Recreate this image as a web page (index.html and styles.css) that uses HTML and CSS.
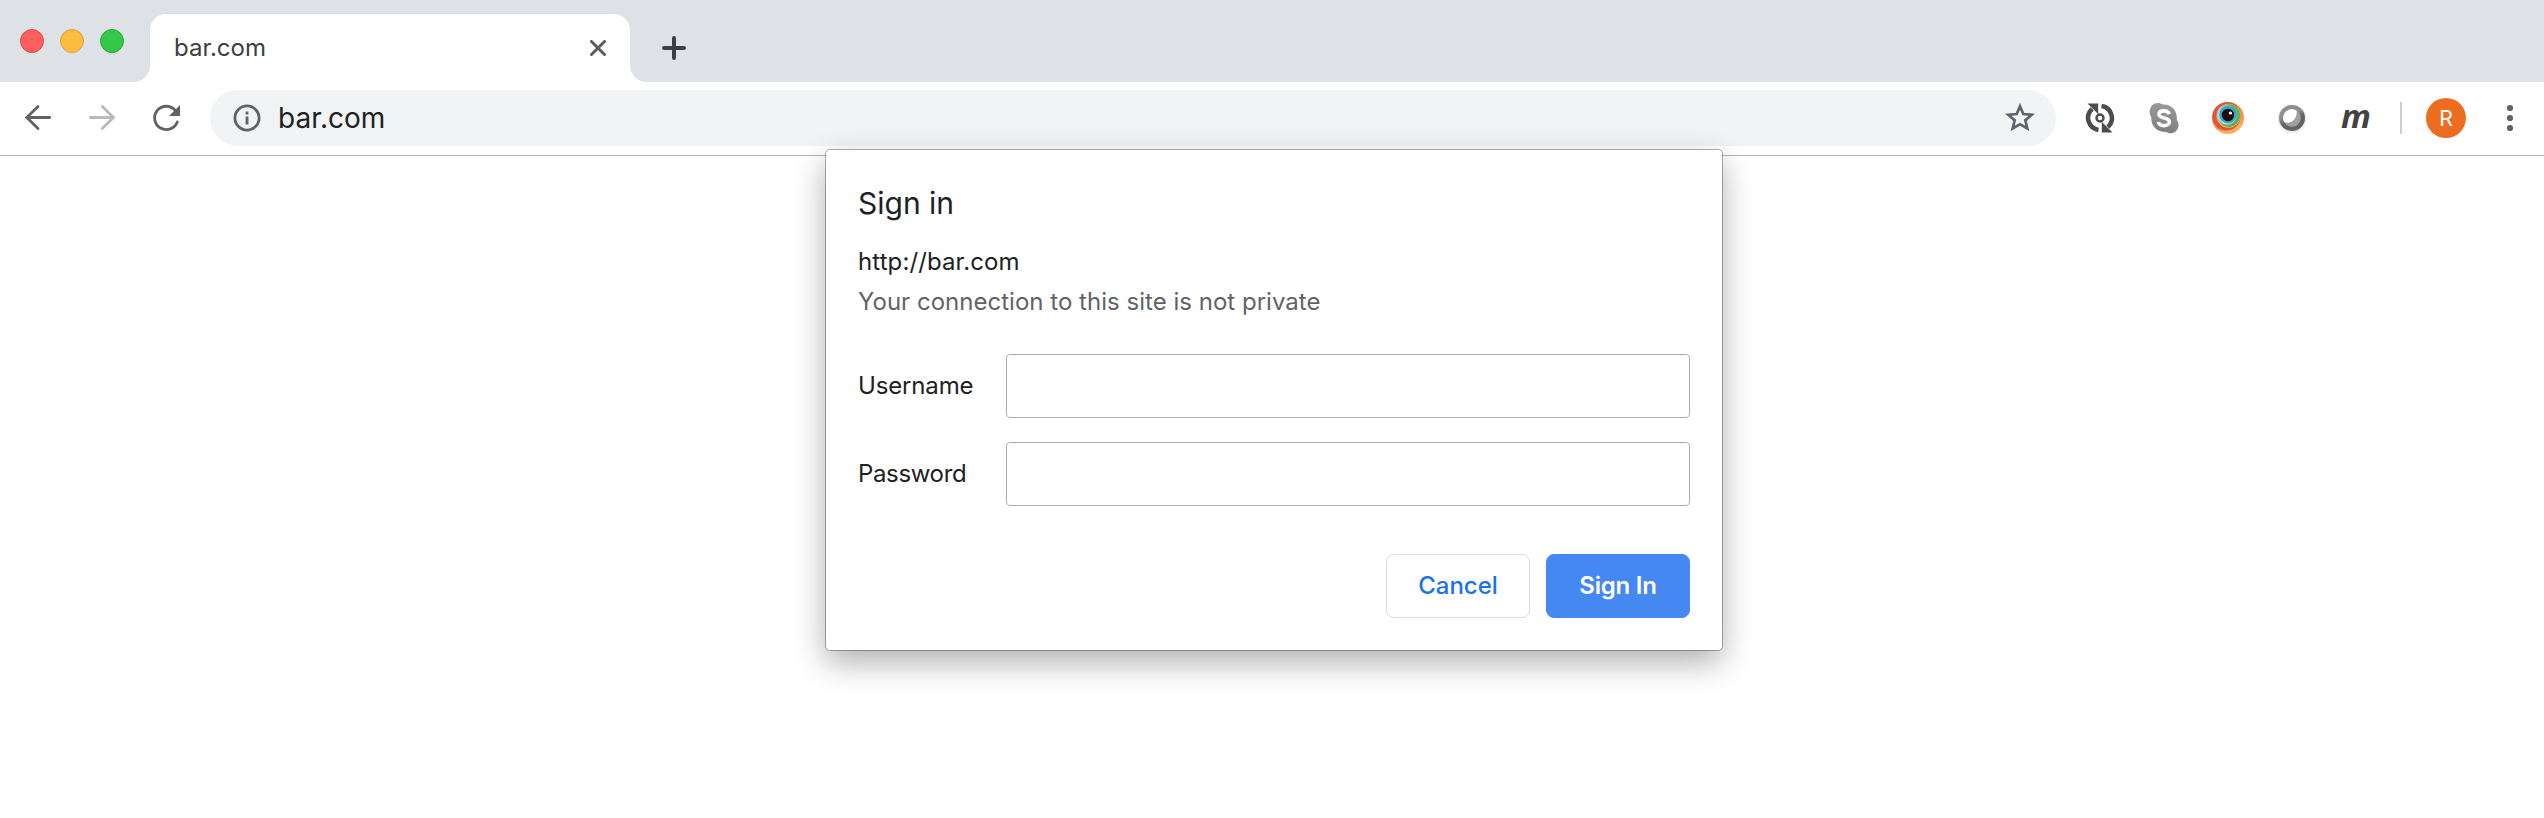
FILE: index.html
```html
<!DOCTYPE html>
<html lang="en">
<head>
<meta charset="utf-8">
<title>bar.com</title>
<link rel="stylesheet" href="styles.css">
</head>
<body>
<header class="tabstrip">
  <div class="lights">
    <span class="light light-close"></span>
    <span class="light light-min"></span>
    <span class="light light-max"></span>
  </div>
  <div class="tab">
    <span class="tab-title">bar.com</span>
    <svg class="tab-close" viewBox="0 0 16 16"><path d="M1.5 1.5l13 13M14.5 1.5l-13 13"/></svg>
  </div>
  <svg class="new-tab" viewBox="0 0 24 24"><path d="M12 2v20M2 12h20"/></svg>
</header>
<nav class="toolbar">
  <div class="cell">
    <svg class="icon nav-icon" viewBox="0 0 32 32"><path d="M27.700 15.500H5M16 4.500L4.800 15.500 16 26.600"/></svg>
  </div>
  <div class="cell">
    <svg class="icon nav-icon disabled" viewBox="0 0 32 32"><path d="M4.400 15.500H27M16.300 4.500L27.500 15.500 16.300 26.600"/></svg>
  </div>
  <div class="cell">
    <svg class="icon nav-icon" viewBox="0 0 32 32"><path d="M27.300 20A11.700 11.700 0 1 1 25.200 8.300"/><path class="solid" d="M30 3v11H19z"/></svg>
  </div>
  <div class="omnibox">
    <svg class="info" viewBox="0 0 28 28"><circle cx="14" cy="14" r="12.100"/><path d="M14 12.600v8M14 7.600v3"/></svg>
    <span class="url">bar.com</span>
    <svg class="star" viewBox="0 0 32 32"><path d="M16 4.300l3.300 7.700 8.400.75-6.350 5.550 1.900 8.200L16 22.200l-7.250 4.300 1.900-8.200L4.300 12.750l8.400-.75z"/></svg>
  </div>
  <div class="extensions">
    <div class="cell">
      <svg class="icon sync" viewBox="0 0 32 32"><circle cx="16" cy="16" r="3.500"/><path class="arc" d="M14.500 27.900A12 12 0 0 1 8.200 7M17.500 4.100A12 12 0 0 1 23.800 25"/><path class="head" d="M3.500 1.500h10.700v10.700l-3.400-3.400-3.300-3.300zM28.500 30.500H17.800V19.800l3.400 3.400 3.300 3.300z"/></svg>
    </div>
    <div class="cell">
      <svg class="icon" viewBox="0 0 32 32">
        <defs><linearGradient id="sk" x1="0" y1="0" x2="0" y2="1"><stop offset="0" stop-color="#9a9a9a"/><stop offset="1" stop-color="#7f7f7f"/></linearGradient></defs>
        <path fill="url(#sk)" d="M9.500 1C12 1 13.500 1.600 14.900 2.500 23 1.700 29.700 8.500 28.800 17.700c3.900 5.800.6 13.600-6 13.600-2.300 0-3.600-.6-5-1.500C9.500 30.700 2.600 24 3.300 15 -.8 9 3.300 1 9.500 1z"/>
        <path class="skype-s" d="M21.200 12.200C20.500 9.500 18 8.900 15.900 8.900c-2.700 0-4.900 1.200-4.900 3.400 0 5 10.400 2.200 10.400 7.500 0 2.400-2.400 3.800-5.400 3.800-2.700 0-5.100-1-5.500-3.600"/>
      </svg>
    </div>
    <div class="cell">
      <svg class="icon" viewBox="0 0 32 32">
        <defs><linearGradient id="eye" x1="0.200" y1="0" x2="0.700" y2="1"><stop offset="0" stop-color="#d8493c"/><stop offset=".5" stop-color="#f08a4b"/><stop offset="1" stop-color="#fbb866"/></linearGradient></defs>
        <circle cx="16" cy="16" r="16" fill="url(#eye)"/>
        <circle cx="14.500" cy="14.500" r="14" fill="#e2543c"/>
        <circle cx="16.500" cy="13.700" r="12" fill="#e9c14e"/>
        <circle cx="16.800" cy="13.600" r="11.300" fill="#5cb25c"/>
        <circle cx="15" cy="13" r="9.800" fill="#a9d5e4"/>
        <circle cx="16" cy="12.500" r="8.800" fill="#34a9cd"/>
        <circle cx="16" cy="13" r="6.200" fill="#1f0a0c"/>
        <ellipse cx="18.400" cy="11" rx="1.700" ry="1.500" fill="#fff"/>
      </svg>
    </div>
    <div class="cell">
      <svg class="icon" viewBox="0 0 32 32">
        <defs><linearGradient id="ring" x1="0.200" y1="0" x2="0.650" y2="1"><stop offset=".4" stop-color="#8f8f8f"/><stop offset=".6" stop-color="#636363"/></linearGradient></defs>
        <circle cx="16" cy="16.700" r="14.500" fill="#000" opacity=".07"/>
        <circle cx="16" cy="16" r="13" fill="url(#ring)"/>
        <circle cx="16" cy="16" r="8.800" fill="#a0a0a0"/>
        <path fill="#fff" d="M20.500 8.400A8.800 8.800 0 0 0 8.300 20.300C15 22.500 21.800 16.500 20.500 8.400z"/>
      </svg>
    </div>
    <div class="cell"><span class="letter-m">m</span></div>
  </div>
  <span class="divider"></span>
  <span class="avatar">R</span>
  <svg class="menu" viewBox="0 0 8 32"><circle cx="4" cy="6" r="3.100"/><circle cx="4" cy="16" r="3.100"/><circle cx="4" cy="26" r="3.100"/></svg>
</nav>
<main class="dialog">
  <h1 class="title">Sign in</h1>
  <p class="origin">http://bar.com</p>
  <p class="warning">Your connection to this site is not private</p>
  <form class="form">
    <label class="label label-user" for="user">Username</label>
    <input class="field" id="user" type="text">
    <label class="label label-pass" for="pass">Password</label>
    <input class="field" id="pass" type="password">
    <div class="actions">
      <button class="button cancel" type="button">Cancel</button>
      <button class="button submit" type="button">Sign In</button>
    </div>
  </form>
</main>
</body>
</html>
```
FILE: styles.css
```css
* { box-sizing: border-box; }
body {
  margin: 0;
  height: 818px;
  overflow: hidden;
  position: relative;
  background: #fff;
  color: #202124;
  font-family: Inter, "Liberation Sans", sans-serif;
  font-size: 24px;
}
svg { display: block; flex: none; fill: none; }

.tabstrip {
  display: flex;
  height: 82px;
  background: #dee1e6;
}
.lights {
  display: flex;
  gap: 16px;
  width: 150px;
  padding: 29px 0 0 20px;
}
.light { width: 24px; height: 24px; border-radius: 50%; border: 1px solid; }
.light-close { background: #fc605c; border-color: #df4744; }
.light-min { background: #fdbc40; border-color: #de9f34; }
.light-max { background: #34c84a; border-color: #27aa35; }
.tab {
  position: relative;
  display: flex;
  align-items: center;
  justify-content: space-between;
  width: 480px;
  margin-top: 14px;
  padding: 0 24px;
  background: #fff;
  border-radius: 16px 16px 0 0;
}
.tab::before, .tab::after {
  content: "";
  position: absolute;
  bottom: 0;
  width: 16px;
  height: 16px;
}
.tab::before { right: 100%; background: radial-gradient(circle at 0 0, transparent 15.500px, #fff 16px); }
.tab::after { left: 100%; background: radial-gradient(circle at 100% 0, transparent 15.500px, #fff 16px); }
.tab-title { color: #3c4043; line-height: 68px; }
.tab-close { width: 16px; height: 16px; stroke: #5a5d61; stroke-width: 3; stroke-linecap: round; }
.new-tab { width: 24px; height: 24px; margin: 36px 0 0 32px; stroke: #3c4043; stroke-width: 4; stroke-linecap: round; }

.toolbar {
  display: flex;
  align-items: center;
  height: 74px;
  padding: 0 30px 1px 6px;
  border-bottom: 1px solid #b2b4b5;
}
.cell { display: flex; justify-content: center; width: 64px; flex: none; }
.icon { width: 32px; height: 32px; }
.nav-icon { stroke: #5f6368; stroke-width: 2.800; stroke-linecap: round; }
.nav-icon .solid { fill: #5f6368; stroke: none; }
.disabled { stroke: #bababa; }
.omnibox {
  display: flex;
  align-items: center;
  flex: 1;
  height: 56px;
  margin: 0 12px;
  padding: 0 20px 0 22.500px;
  border-radius: 28px;
  background: #f1f3f4;
}
.info { width: 28px; height: 28px; stroke: #5f6368; stroke-width: 2.800; }
.url { flex: 1; margin-left: 17.500px; font-size: 28px; line-height: 56px; }
.star { width: 32px; height: 32px; stroke: #5f6368; stroke-width: 2.700; }
.extensions { display: flex; align-items: center; }
.sync { stroke: #4c4c4c; }
.sync circle { stroke-width: 2.500; }
.sync .arc { stroke-width: 4.500; }
.sync .head { fill: #4c4c4c; stroke: none; }
.skype-s { stroke: #fff; stroke-width: 3.600; }
.letter-m { padding-bottom: 4px; font: italic 700 33px/32px "Open Sans", sans-serif; color: #424242; }
.divider { width: 2px; height: 32px; margin-left: 12px; background: #d0d0d0; }
.avatar {
  width: 40px;
  height: 40px;
  margin-left: 24px;
  border-radius: 50%;
  background: #ee6c20;
  color: #fff;
  font: 22px/41px Roboto, sans-serif;
  text-align: center;
}
.menu { width: 8px; height: 32px; margin-left: 40px; fill: #5f6368; }

.dialog {
  position: absolute;
  top: 150px;
  left: 826px;
  width: 896px;
  height: 500px;
  padding: 31px 32px 32px;
  border-radius: 4px;
  background: #fff;
  box-shadow: 0 0 0 1px rgba(0, 0, 0, .3), 0 12px 32px rgba(0, 0, 0, .32);
}
.title, .origin, .warning { margin: 0; font-weight: 400; white-space: nowrap; }
.title { font-size: 30px; line-height: 44px; }
.origin { margin-top: 17px; line-height: 40px; letter-spacing: .1px; }
.warning { line-height: 40px; color: #5f6368; letter-spacing: .02px; }
.form {
  display: grid;
  grid-template-columns: 148px 1fr;
  align-items: center;
  row-gap: 24px;
  margin-top: 32px;
}
.label { padding-bottom: 2px; }
.label-user { letter-spacing: -.15px; }
.label-pass { letter-spacing: -.35px; }
.field {
  width: 100%;
  height: 64px;
  border: 1px solid #adadad;
  border-radius: 4px;
  background: #fff;
  font: inherit;
}
.actions {
  grid-column: 1 / -1;
  display: flex;
  justify-content: flex-end;
  gap: 16px;
  margin-top: 24px;
}
.button {
  width: 144px;
  height: 64px;
  padding: 0 0 2px;
  border: 1px solid #dadce0;
  border-radius: 8px;
  background: #fff;
  font: 500 24px Inter, "Liberation Sans", sans-serif;
}
.cancel { color: #1a73e8; }
.submit { border-color: #4688f1; background: #4688f1; color: #fff; font-weight: 600; letter-spacing: -.2px; }
```
